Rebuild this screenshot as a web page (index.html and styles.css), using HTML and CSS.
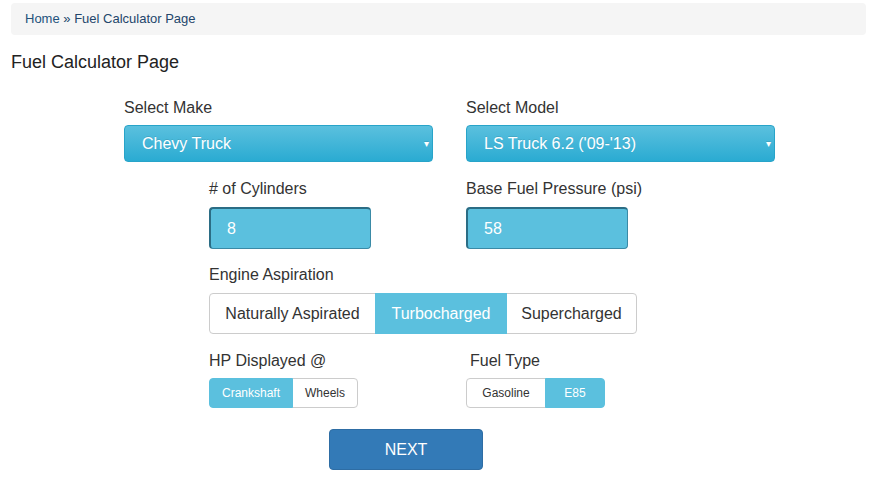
FILE: index.html
```html
<!DOCTYPE html>
<html>
  <head>
    <meta charset="utf-8" />
    <title>Fuel Calculator Page</title>
    <meta name="viewport" content="width=device-width, initial-scale=1" />
    <link rel="stylesheet" href="styles.css">
  </head>
  <body>
    <div class="breadcrumb">
      <a href="#">Home</a> &raquo; <span>Fuel Calculator Page</span>
    </div>

    <h1 class="page-title">Fuel Calculator Page</h1>

    <form class="calc">
      <div class="row-wide">
        <div class="field">
          <label>Select Make</label>
          <div class="select">Chevy Truck<span class="caret">&#9662;</span></div>
        </div>
        <div class="field">
          <label>Select Model</label>
          <div class="select">LS Truck 6.2 ('09-'13)<span class="caret">&#9662;</span></div>
        </div>
      </div>

      <div class="row-inner row-inputs">
        <div class="field">
          <label>&#35; of Cylinders</label>
          <input class="num" type="text" value="8" />
        </div>
        <div class="field">
          <label>Base Fuel Pressure (psi)</label>
          <input class="num" type="text" value="58" />
        </div>
      </div>

      <div class="row-aspiration">
        <div class="field">
          <label>Engine Aspiration</label>
          <div class="btn-group">
            <button type="button" class="btn btn-na">Naturally Aspirated</button>
            <button type="button" class="btn btn-turbo active">Turbocharged</button>
            <button type="button" class="btn btn-super">Supercharged</button>
          </div>
        </div>
      </div>

      <div class="row-inner row-small">
        <div class="field">
          <label>HP Displayed @</label>
          <div class="btn-group btn-group-sm">
            <button type="button" class="btn w-crank active">Crankshaft</button>
            <button type="button" class="btn w-wheels">Wheels</button>
          </div>
        </div>
        <div class="field">
          <label class="label-fuel">Fuel Type</label>
          <div class="btn-group btn-group-sm">
            <button type="button" class="btn w-gas">Gasoline</button>
            <button type="button" class="btn w-e85 active">E85</button>
          </div>
        </div>
      </div>

      <div class="actions">
        <button type="button" class="btn-next">NEXT</button>
      </div>
    </form>
  </body>
</html>
```

FILE: styles.css
```css
  body {
    margin: 0;
    font-family: "Liberation Sans", Arial, Helvetica, sans-serif;
    color: #333333;
    background: #ffffff;
  }
  .breadcrumb {
    margin: 3px 16px 0 11px;
    padding: 7px 14px;
    background-color: #f5f5f5;
    border-radius: 4px;
    font-size: 13px;
    line-height: 18px;
    color: #23466b;
  }
  .breadcrumb a {
    color: #23527c;
    text-decoration: none;
  }
  .page-title {
    margin: 17px 0 0 11px;
    font-size: 18px;
    line-height: 20px;
    font-weight: normal;
    color: #222222;
  }
  .calc {
    width: 651px;
    margin-left: 124px;
    font-size: 16px;
  }
  .field label {
    display: block;
    line-height: 20px;
  }
  .row-wide {
    display: grid;
    grid-template-columns: 309px 309px;
    column-gap: 33px;
    margin-top: 26px;
  }
  .row-wide label {
    margin-bottom: 7px;
  }
  .select {
    position: relative;
    height: 37px;
    box-sizing: border-box;
    padding: 0 17px;
    line-height: 36px;
    color: #ffffff;
    border: 1px solid #28a4c9;
    border-radius: 4px;
    background-image: linear-gradient(to bottom, #5bc0de 0, #2aabd2 100%);
    text-shadow: 0 -1px 0 rgba(0, 0, 0, 0.1);
  }
  .caret {
    position: absolute;
    right: 3px;
    top: 0;
    font-size: 10px;
  }
  .row-inner {
    display: grid;
    grid-template-columns: 257px auto;
    margin-left: 85px;
  }
  .row-inputs {
    margin-top: 17px;
  }
  .row-inputs label {
    margin-bottom: 8px;
  }
  .num {
    display: block;
    width: 162px;
    height: 42px;
    box-sizing: border-box;
    padding: 0 16px;
    font-family: inherit;
    font-size: 16px;
    color: #ffffff;
    background-color: #5bc0de;
    border: 1px solid #3a8aa6;
    border-top: 2px solid #2b6d85;
    border-left: 2px solid #2b6d85;
    border-radius: 4px;
  }
  .row-aspiration {
    margin-left: 85px;
    margin-top: 16px;
  }
  .row-aspiration label {
    margin-bottom: 8px;
  }
  .btn-group {
    display: flex;
  }
  .btn {
    flex-shrink: 0;
    height: 41px;
    box-sizing: border-box;
    margin: 0;
    padding: 0;
    font-family: inherit;
    font-size: 16px;
    color: #333333;
    background: #ffffff;
    border: 1px solid #cccccc;
    border-radius: 0;
  }
  .btn + .btn {
    margin-left: -1px;
  }
  .btn-group .btn:first-child {
    border-radius: 4px 0 0 4px;
  }
  .btn-group .btn:last-child {
    border-radius: 0 4px 4px 0;
  }
  .btn.active {
    color: #ffffff;
    background-color: #5bc0de;
    border-color: #5bc0de;
    position: relative;
  }
  .btn-na { width: 167px; }
  .btn-turbo { width: 132px; }
  .btn-super { width: 131px; }
  .row-small {
    margin-top: 17px;
  }
  .row-small label {
    margin-bottom: 7px;
  }
  .label-fuel {
    padding-left: 4px;
  }
  .btn-group-sm .btn {
    height: 30px;
    font-size: 12px;
  }
  .w-crank { width: 84px; }
  .w-wheels { width: 66px; }
  .w-gas { width: 80px; }
  .w-e85 { width: 60px; }
  .actions {
    margin-top: 21px;
    padding-left: 205px;
  }
  .btn-next {
    width: 154px;
    height: 41px;
    font-family: inherit;
    font-size: 16px;
    color: #ffffff;
    background-color: #337ab7;
    border: 1px solid #2e6da4;
    border-radius: 4px;
  }
```
